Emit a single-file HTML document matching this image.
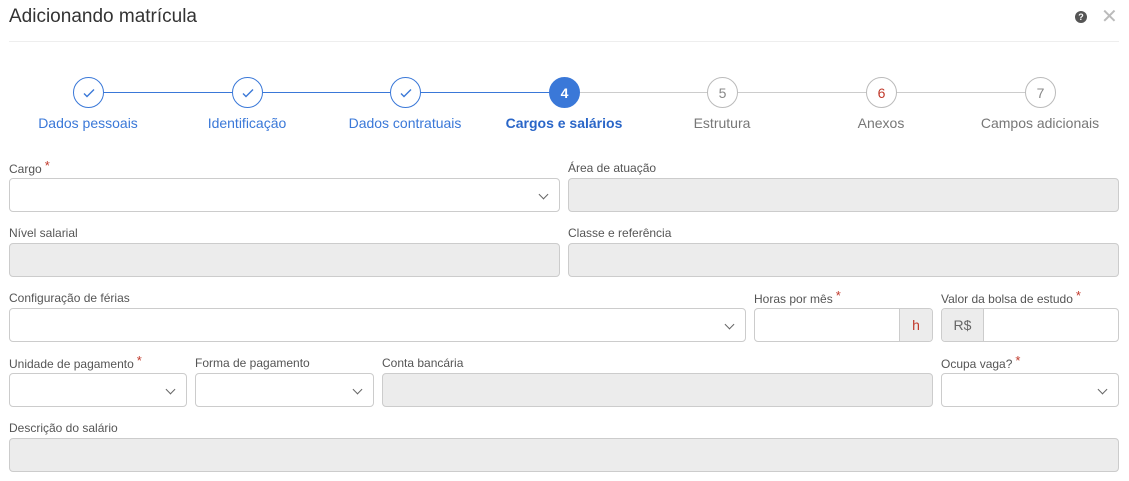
<!DOCTYPE html>
<html><head><meta charset="utf-8"><style>
*{box-sizing:border-box;margin:0;padding:0}
body{width:1129px;height:481px;background:#fff;font-family:"Liberation Sans",sans-serif;position:relative;overflow:hidden;color:#555}
.abs{position:absolute}
.title{left:9px;top:6px;font-size:19px;color:#333}
.hr{left:9px;top:41px;width:1110px;height:1px;background:#eee}
.line{top:92px;height:1px}
.c{width:31px;height:31px;border-radius:50%;border:1px solid #3a78d8;background:#fff;top:77px;display:flex;align-items:center;justify-content:center;font-size:14px}
.sl{top:115px;font-size:14px;width:160px;text-align:center}
.lbl{font-size:12px;color:#555}
.lbl b{color:#c0392b;font-weight:normal;font-size:13px;position:relative;top:-3px;margin-left:3px}
.in{height:34px;border:1px solid #ccc;border-radius:4px;background:#fff}
.dis{background:#ececec}
.chev{position:absolute;right:12px;top:12px;width:7px;height:7px;border-right:1px solid #666;border-bottom:1px solid #666;transform:rotate(45deg)}
.add{position:absolute;top:0;height:32px;background:#ececec;display:flex;align-items:center;justify-content:center;font-size:14px}
</style></head><body>
<div class="abs title">Adicionando matrícula</div>
<div class="abs" style="left:1075px;top:11px;width:12px;height:12px;border-radius:50%;background:#555;color:#fff;font-size:9px;font-weight:bold;text-align:center;line-height:12px">?</div>
<div class="abs" style="left:1101px;top:7px;font-size:20px;color:#bbb;line-height:20px">✕</div>
<div class="abs hr"></div>
<div class="abs line" style="left:88px;width:476px;background:#3a78d8"></div>
<div class="abs line" style="left:564px;width:476px;background:#ccc"></div>
<div class="abs c" style="left:73px"><svg width="14" height="14" viewBox="0 0 14 14"><path d="M2 7.5l3 3 7-7" fill="none" stroke="#3a78d8" stroke-width="1.4"/></svg></div>
<div class="abs c" style="left:232px"><svg width="14" height="14" viewBox="0 0 14 14"><path d="M2 7.5l3 3 7-7" fill="none" stroke="#3a78d8" stroke-width="1.4"/></svg></div>
<div class="abs c" style="left:390px"><svg width="14" height="14" viewBox="0 0 14 14"><path d="M2 7.5l3 3 7-7" fill="none" stroke="#3a78d8" stroke-width="1.4"/></svg></div>
<div class="abs c" style="left:549px;background:#3a78d8;color:#fff;font-weight:bold">4</div>
<div class="abs c" style="left:707px;border-color:#bbb;color:#888">5</div>
<div class="abs c" style="left:866px;border-color:#bbb;color:#c0392b">6</div>
<div class="abs c" style="left:1025px;border-color:#bbb;color:#888">7</div>
<div class="abs sl" style="left:8px;color:#3a78d8">Dados pessoais</div>
<div class="abs sl" style="left:167px;color:#3a78d8">Identificação</div>
<div class="abs sl" style="left:325px;color:#3a78d8">Dados contratuais</div>
<div class="abs sl" style="left:484px;color:#2a66c8;font-weight:bold">Cargos e salários</div>
<div class="abs sl" style="left:642px;color:#777">Estrutura</div>
<div class="abs sl" style="left:801px;color:#777">Anexos</div>
<div class="abs sl" style="left:950px;width:180px;color:#777">Campos adicionais</div>

<div class="abs lbl" style="left:9px;top:161px">Cargo<b>*</b></div>
<div class="abs in" style="left:9px;top:178px;width:551px"><span class="chev"></span></div>
<div class="abs lbl" style="left:568px;top:161px">Área de atuação</div>
<div class="abs in dis" style="left:568px;top:178px;width:551px"></div>

<div class="abs lbl" style="left:9px;top:226px">Nível salarial</div>
<div class="abs in dis" style="left:9px;top:243px;width:551px"></div>
<div class="abs lbl" style="left:568px;top:226px">Classe e referência</div>
<div class="abs in dis" style="left:568px;top:243px;width:551px"></div>

<div class="abs lbl" style="left:9px;top:291px">Configuração de férias</div>
<div class="abs in" style="left:9px;top:308px;width:737px"><span class="chev"></span></div>
<div class="abs lbl" style="left:754px;top:291px">Horas por mês<b>*</b></div>
<div class="abs in" style="left:754px;top:308px;width:179px"><div class="add" style="right:0;width:33px;border-left:1px solid #ccc;color:#c0392b;border-radius:0 3px 3px 0">h</div></div>
<div class="abs lbl" style="left:941px;top:291px">Valor da bolsa de estudo<b>*</b></div>
<div class="abs in" style="left:941px;top:308px;width:178px"><div class="add" style="left:0;width:42px;border-right:1px solid #ccc;color:#666;border-radius:3px 0 0 3px">R$</div></div>

<div class="abs lbl" style="left:9px;top:356px">Unidade de pagamento<b>*</b></div>
<div class="abs in" style="left:9px;top:373px;width:178px"><span class="chev"></span></div>
<div class="abs lbl" style="left:195px;top:356px">Forma de pagamento</div>
<div class="abs in" style="left:195px;top:373px;width:179px"><span class="chev"></span></div>
<div class="abs lbl" style="left:382px;top:356px">Conta bancária</div>
<div class="abs in dis" style="left:382px;top:373px;width:551px"></div>
<div class="abs lbl" style="left:941px;top:356px">Ocupa vaga?<b>*</b></div>
<div class="abs in" style="left:941px;top:373px;width:178px"><span class="chev"></span></div>

<div class="abs lbl" style="left:9px;top:421px">Descrição do salário</div>
<div class="abs in dis" style="left:9px;top:438px;width:1110px"></div>
</body></html>
